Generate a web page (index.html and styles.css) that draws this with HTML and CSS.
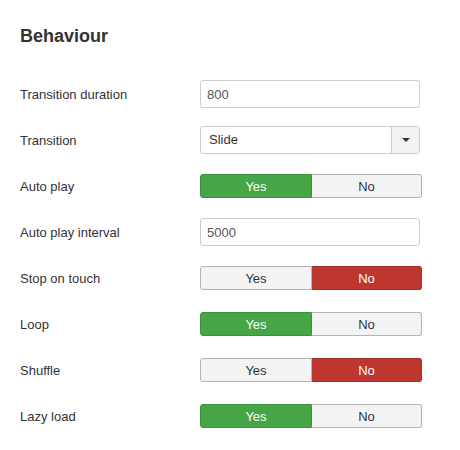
FILE: index.html
```html
<!DOCTYPE html>
<html lang="en">
<head>
  <meta charset="UTF-8">
  <title>Behaviour</title>
  <link rel="stylesheet" href="styles.css">
</head>
<body>
  <div class="panel">
    <h2>Behaviour</h2>
    <div class="form">
      <div class="row">
        <label>Transition duration</label>
        <input type="text" class="field" value="800">
      </div>
      <div class="row">
        <label>Transition</label>
        <div class="select">
          <span class="select-value">Slide</span>
          <span class="select-btn"><span class="caret"></span></span>
        </div>
      </div>
      <div class="row">
        <label>Auto play</label>
        <div class="toggle">
          <button class="yes on">Yes</button><button class="no">No</button>
        </div>
      </div>
      <div class="row">
        <label>Auto play interval</label>
        <input type="text" class="field" value="5000">
      </div>
      <div class="row">
        <label>Stop on touch</label>
        <div class="toggle">
          <button class="yes">Yes</button><button class="no on">No</button>
        </div>
      </div>
      <div class="row">
        <label>Loop</label>
        <div class="toggle">
          <button class="yes on">Yes</button><button class="no">No</button>
        </div>
      </div>
      <div class="row">
        <label>Shuffle</label>
        <div class="toggle">
          <button class="yes">Yes</button><button class="no on">No</button>
        </div>
      </div>
      <div class="row">
        <label>Lazy load</label>
        <div class="toggle">
          <button class="yes on">Yes</button><button class="no">No</button>
        </div>
      </div>
    </div>
  </div>
</body>
</html>
```

FILE: styles.css
```css
body {
  margin: 0;
  background: #fff;
  font-family: "Liberation Sans", Arial, sans-serif;
  font-size: 13px;
  color: #333;
}

.panel {
  padding: 26px 20px 20px 20px;
}

h2 {
  margin: 0 0 34px 0;
  font-size: 18px;
  line-height: 20px;
  font-weight: bold;
  color: #333;
}

.form {
  display: flex;
  flex-direction: column;
  gap: 18px;
}

.row {
  display: flex;
  align-items: center;
  height: 28px;
}

.row label {
  width: 180px;
  flex: none;
}

.field {
  width: 220px;
  height: 28px;
  box-sizing: border-box;
  padding: 0 6px;
  border: 1px solid #ccc;
  border-radius: 3px;
  font-family: inherit;
  font-size: 13px;
  color: #555;
  outline: none;
}

.select {
  width: 220px;
  height: 28px;
  box-sizing: border-box;
  display: flex;
  border: 1px solid #ccc;
  border-radius: 3px;
  background: #fff;
}

.select-value {
  flex: 1;
  padding: 0 8px;
  line-height: 26px;
  color: #333;
}

.select-btn {
  width: 27px;
  display: flex;
  align-items: center;
  justify-content: center;
  border-left: 1px solid #ccc;
  background: #f3f3f3;
  border-radius: 0 2px 2px 0;
}

.caret {
  width: 0;
  height: 0;
  border-left: 4px solid transparent;
  border-right: 4px solid transparent;
  border-top: 4px solid #333;
}

.toggle {
  display: flex;
  width: 222px;
  height: 24px;
}

.toggle button {
  box-sizing: border-box;
  height: 24px;
  margin: 0;
  padding: 0;
  border: 1px solid #b3b3b3;
  background: #f3f3f3;
  color: #333;
  font-family: inherit;
  font-size: 13px;
  cursor: pointer;
}

.toggle .yes {
  width: 112px;
  border-radius: 3px 0 0 3px;
}

.toggle .no {
  width: 110px;
  border-left: none;
  border-radius: 0 3px 3px 0;
}

.toggle .yes.on {
  background: #46a546;
  border-color: #3c913c;
  color: #fff;
}

.toggle .no.on {
  background: #bd362f;
  border-color: #a52f29;
  color: #fff;
}
```
